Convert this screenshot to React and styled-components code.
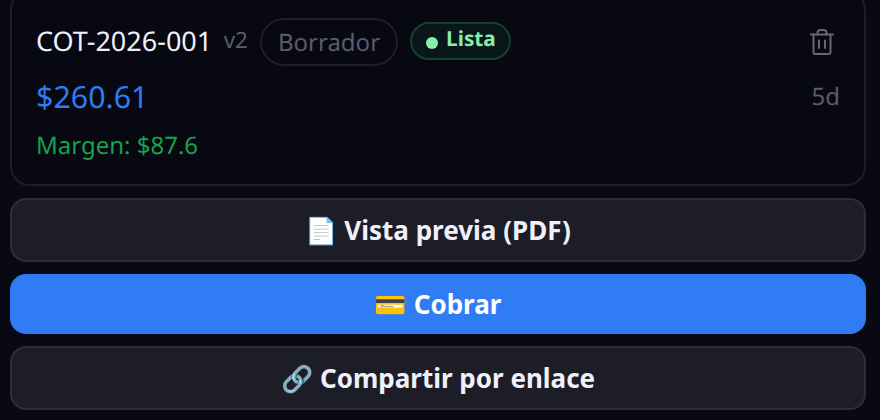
import React from "react";
import styled, { createGlobalStyle } from "styled-components";

const Global = createGlobalStyle`
  html, body { margin: 0; padding: 0; background: #080912; overflow: hidden; }
  body { font-family: "Noto Sans", "Noto Color Emoji", sans-serif; text-rendering: geometricPrecision; }
`;

const Page = styled.div`
  width: 880px;
  height: 420px;
  overflow: hidden;
  box-sizing: border-box;
  padding: 0 14px 0 10px;
  display: flex;
  flex-direction: column;
  gap: 12px;
`;

const Card = styled.div`
  box-sizing: border-box;
  height: 196px;
  margin-top: -10px;
  flex: none;
  background: #070812;
  border: 2px solid #1f1f2a;
  border-radius: 20px;
  padding: 26px 24px 0;
  display: flex;
  justify-content: space-between;
`;

const Main = styled.div`
  display: flex;
  flex-direction: column;
`;

const TitleRow = styled.div`
  display: flex;
  align-items: center;
  height: 48px;
`;

const Code = styled.span`
  font-size: 27px;
  line-height: 32px;
  color: #f0f0fa;
  position: relative;
  top: -1px;
`;

const Version = styled.span`
  font-size: 22.4px;
  color: #5c5c6b;
  margin-left: 11.5px;
  position: relative;
  top: -3px;
`;

const DraftPill = styled.span`
  box-sizing: border-box;
  height: 48px;
  margin-left: 12px;
  padding: 0 16px;
  border: 2px solid #1f1f2a;
  border-radius: 24px;
  color: #5c5c6b;
  font-size: 24px;
  display: flex;
  align-items: center;
`;

const ReadyPill = styled.span`
  box-sizing: border-box;
  height: 38px;
  margin: 0 0 2px 12px;
  padding: 0 13.5px;
  border: 2px solid #14432c;
  border-radius: 19px;
  background: #0a161a;
  color: #86efac;
  font-size: 20.8px;
  font-weight: 700;
  display: flex;
  align-items: center;
  gap: 8.5px;
`;

const Dot = styled.i`
  width: 12px;
  height: 12px;
  border-radius: 50%;
  background: #86efac;
  margin-top: 3px;
`;

const Label = styled.span`
  position: relative;
  top: -2px;
`;

const Price = styled.div`
  font-size: 30.4px;
  line-height: 38px;
  color: #2f7cf0;
  margin-top: 12px;
`;

const Margin = styled.div`
  font-size: 24px;
  line-height: 30px;
  color: #16a34a;
  margin-top: 15px;
`;

const Side = styled.div`
  display: flex;
  flex-direction: column;
  align-items: flex-end;
`;

const TrashBtn = styled.button`
  all: unset;
  display: flex;
  color: #666674;
  height: 48px;
  align-items: center;
  margin-right: 6px;
`;

const Age = styled.div`
  font-size: 24px;
  line-height: 38px;
  color: #5c5c6b;
  margin-top: 12px;
`;

const ActionButton = styled.button`
  box-sizing: border-box;
  flex: none;
  width: 856px;
  height: ${(p) => (p.$primary ? 60 : 64)}px;
  border: ${(p) => (p.$primary ? "none" : "2px solid #2e2e3a")};
  border-radius: 16px;
  background: ${(p) => (p.$primary ? "#2f7cf5" : "#1d1d28")};
  color: ${(p) => (p.$primary ? "#ffffff" : "#f0f0fa")};
  font-family: inherit;
  font-size: 26px;
  font-weight: 700;
  display: flex;
  align-items: center;
  justify-content: center;
`;

const Trash = () => (
  <svg width="24" height="26" viewBox="0 0 24 26" fill="none" stroke="currentColor" strokeWidth="2" strokeLinecap="round" strokeLinejoin="round">
    <path d="M1 5.5h22" />
    <path d="M3.5 5.5v17.5a2 2 0 0 0 2 2h13a2 2 0 0 0 2-2V5.5" />
    <path d="M7.5 5.5V4a3 3 0 0 1 3-3h3a3 3 0 0 1 3 3v1.5" />
    <path d="M9 11.5v7.5" />
    <path d="M15 11.5v7.5" />
  </svg>
);

export default function App() {
  return (
    <Page>
      <Global />
      <Card>
        <Main>
          <TitleRow>
            <Code>COT-2026-001</Code>
            <Version>v2</Version>
            <DraftPill>Borrador</DraftPill>
            <ReadyPill><Dot /><Label>Lista</Label></ReadyPill>
          </TitleRow>
          <Price>$260.61</Price>
          <Margin>Margen: $87.6</Margin>
        </Main>
        <Side>
          <TrashBtn aria-label="Eliminar"><Trash /></TrashBtn>
          <Age>5d</Age>
        </Side>
      </Card>
      <ActionButton>📄 Vista previa (PDF)</ActionButton>
      <ActionButton $primary>💳 Cobrar</ActionButton>
      <ActionButton>🔗 Compartir por enlace</ActionButton>
    </Page>
  );
}
